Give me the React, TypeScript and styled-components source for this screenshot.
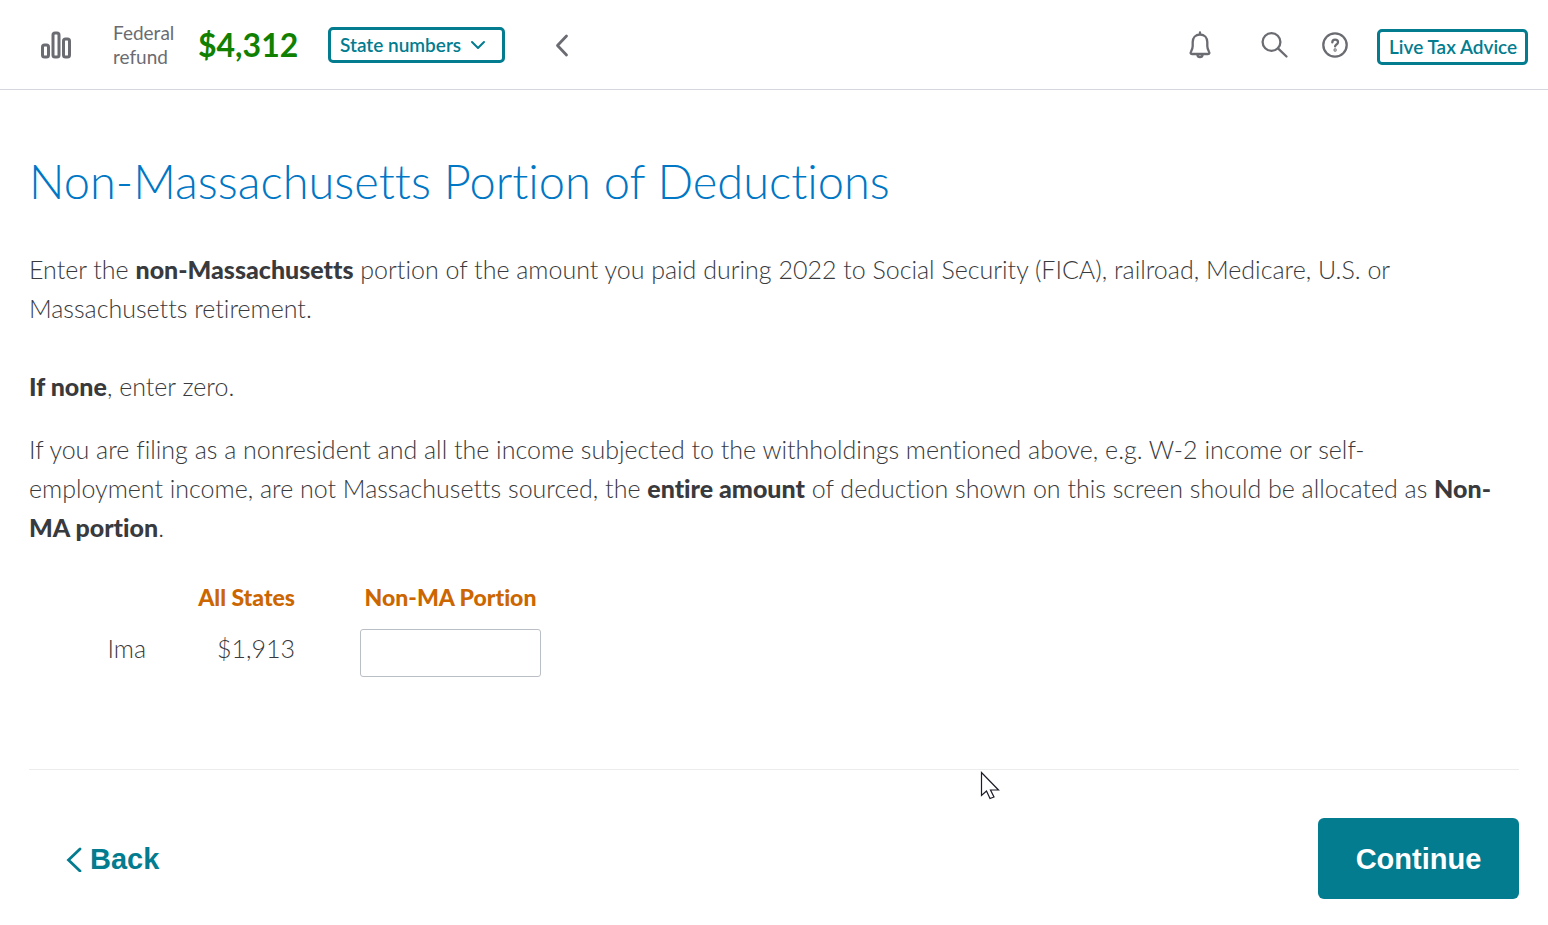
import React from "react";
import styled, { createGlobalStyle } from "styled-components";

const teal = "#037c8f";
const iconGrey = "#6b6c72";

const GlobalStyle = createGlobalStyle`
  *, *::before, *::after { box-sizing: border-box; }
  body {
    margin: 0;
    background: #fff;
    color: #393a3d;
    font-family: Lato, "Open Sans", sans-serif;
    font-weight: 300;
    font-variant-ligatures: none;
  }
`;

const Header = styled.header`
  display: flex;
  align-items: center;
  height: 90px;
  padding: 0 20px 0 40px;
  border-bottom: 1px solid #d4d7dc;
`;

const RefundLabel = styled.span`
  width: 62px;
  margin-left: 41px;
  color: ${iconGrey};
  font-size: 19px;
  font-weight: 400;
  line-height: 24px;
`;

const RefundAmount = styled.span`
  margin-left: 23px;
  width: 130px;
  color: #108000;
  font-size: 32px;
  font-weight: 700;
  line-height: 40px;
`;

const OutlineButton = styled.button<{ $wide?: boolean }>`
  display: flex;
  align-items: center;
  gap: 9px;
  flex: none;
  width: ${(p) => (p.$wide ? 177 : 151)}px;
  height: 36px;
  padding: 0 9px;
  border: 3px solid ${teal};
  border-radius: 5px;
  background: #fff;
  color: ${teal};
  font: 600 19px/24px Lato, "Open Sans", sans-serif;
  white-space: nowrap;
`;

const IconButton = styled.button`
  display: flex;
  flex: none;
  padding: 0;
  border: 0;
  background: none;
  color: ${iconGrey};
`;

const CollapseButton = styled(IconButton)`
  margin-left: 48px;
`;

const Tools = styled.div`
  display: flex;
  align-items: center;
  gap: 28px;
  margin-left: auto;
`;

const BellButton = styled(IconButton)`
  margin-right: 15px;
`;

const AdviceButton = styled(OutlineButton)`
  margin: 4px 0 0 -2px;
`;

const Main = styled.main`
  padding: 61px 29px 26px;
`;

const Title = styled.h1`
  margin: 0 0 39px;
  color: #0077c5;
  font-size: 47px;
  font-weight: 300;
  line-height: 60px;
`;

const Text = styled.p`
  margin: 0 0 24px;
  font-size: 25px;
  line-height: 39px;

  b { font-weight: 900; }
`;

const Amounts = styled.table`
  border-collapse: collapse;
  margin-top: 31px;
  font-size: 25px;
  line-height: 39px;
`;

const HeadCell = styled.th`
  padding: 0 0 12px;
  color: #cc6600;
  font-size: 23px;
  font-weight: 900;
  text-align: right;
`;

const NameCell = styled.th`
  width: 117px;
  padding: 0;
  font-weight: 300;
  text-align: right;
  vertical-align: top;
`;

const AmountCell = styled.td`
  width: 149px;
  padding: 0;
  text-align: right;
  vertical-align: top;
`;

const InputHead = styled(HeadCell)`
  padding: 0 0 12px 65px;
  text-align: center;
`;

const InputCell = styled.td`
  padding: 0 0 0 65px;
`;

const AmountInput = styled.input`
  display: block;
  width: 181px;
  height: 48px;
  padding: 0 12px;
  border: 1px solid #babec5;
  border-radius: 3px;
  background: #fff;
  color: inherit;
  font: inherit;
`;

const Footer = styled.footer`
  display: flex;
  align-items: center;
  justify-content: space-between;
  margin-top: 92px;
  padding-top: 48px;
  border-top: 1px solid #ebecee;
`;

const BackButton = styled.button`
  display: flex;
  align-items: center;
  gap: 8px;
  padding: 0 0 0 37px;
  border: 0;
  background: none;
  color: ${teal};
  font: 700 29px/40px "Liberation Sans", Arial, sans-serif;
`;

const ContinueButton = styled.button`
  width: 201px;
  height: 81px;
  padding: 0;
  border: 0;
  border-radius: 6px;
  background: ${teal};
  color: #fff;
  font: 700 29px/40px "Liberation Sans", Arial, sans-serif;
`;

const Pointer = styled.svg`
  position: absolute;
  top: 771px;
  left: 980px;
  pointer-events: none;
`;

export default function App() {
  return (
    <>
      <GlobalStyle />
      <Header>
        <IconButton aria-label="Tax summary">
          <svg width="32" height="32" viewBox="0 0 32 32" fill="none" stroke="currentColor" strokeWidth="3">
            <rect x="2.5" y="16" width="6" height="12" rx="2" />
            <rect x="13" y="4" width="6" height="24" rx="2" />
            <rect x="23.5" y="10" width="6" height="18" rx="2" />
          </svg>
        </IconButton>
        <RefundLabel>Federal refund</RefundLabel>
        <RefundAmount>$4,312</RefundAmount>
        <OutlineButton $wide>
          State numbers
          <svg width="16" height="10" viewBox="0 0 16 10" fill="none" stroke="currentColor" strokeWidth="2" strokeLinecap="round" strokeLinejoin="round">
            <path d="M2 2l6 6 6-6" />
          </svg>
        </OutlineButton>
        <CollapseButton aria-label="Collapse">
          <svg width="18" height="24" viewBox="0 0 18 24" fill="none" stroke="currentColor" strokeWidth="2.8" strokeLinecap="round" strokeLinejoin="round">
            <path d="M13.5 3L4.5 12.5l9 9.500" />
          </svg>
        </CollapseButton>
        <Tools>
          <BellButton aria-label="Notifications">
            <svg width="32" height="32" viewBox="0 0 32 32" fill="none" stroke="currentColor" strokeWidth="2.3" strokeLinecap="round" strokeLinejoin="round">
              <path d="M16 3.5v2M16 5.5c-4.600 0-7.300 3.400-7.300 7.600v4c0 2.500-.6 3.600-1.600 5.400-.8 1.300-.8 2.500 1 2.500h15.800c1.800 0 1.800-1.200 1-2.500-1-1.800-1.600-2.900-1.600-5.400v-4C23.300 8.900 20.600 5.500 16 5.500zM13.300 25.500c.2 1.500 1.200 2.500 2.700 2.500s2.500-1 2.700-2.500" />
            </svg>
          </BellButton>
          <IconButton aria-label="Search">
            <svg width="32" height="32" viewBox="0 0 32 32" fill="none" stroke="currentColor" strokeWidth="2.3" strokeLinecap="round">
              <circle cx="12.5" cy="13" r="8.9" />
              <path d="M19 19.400L27.500 27.500" />
            </svg>
          </IconButton>
          <IconButton aria-label="Help">
            <svg width="32" height="32" viewBox="0 0 32 32" fill="none" stroke="currentColor" strokeWidth="2.3" strokeLinecap="round" strokeLinejoin="round">
              <circle cx="16" cy="16" r="11.7" />
              <path d="M13.3 13.4c0-1.700 1.100-2.700 2.800-2.700s2.900 1 2.900 2.500c0 2.300-2.900 2.200-2.900 4.200" />
              <circle cx="16.1" cy="21" r=".5" />
            </svg>
          </IconButton>
          <AdviceButton>Live Tax Advice</AdviceButton>
        </Tools>
      </Header>
      <Main>
        <Title>Non-Massachusetts Portion of Deductions</Title>
        <Text>
          Enter the <b>non-Massachusetts</b> portion of the amount you paid during 2022 to Social
          Security (FICA), railroad, Medicare, U.S. or Massachusetts retirement.
          <br />
          <br />
          <b>If none</b>, enter zero.
        </Text>
        <Text>
          If you are filing as a nonresident and all the income subjected to the withholdings
          mentioned above, e.g. W-2 income or self-<br />employment income, are not Massachusetts
          sourced, the <b>entire amount</b> of deduction shown on this screen should be allocated
          as <b>Non-<br />MA portion</b>.
        </Text>
        <Amounts>
          <thead>
            <tr>
              <td />
              <HeadCell scope="col">All States</HeadCell>
              <InputHead scope="col" id="portion">Non-MA Portion</InputHead>
            </tr>
          </thead>
          <tbody>
            <tr>
              <NameCell scope="row" id="person">Ima</NameCell>
              <AmountCell>$1,913</AmountCell>
              <InputCell>
                <AmountInput type="text" aria-labelledby="person portion" />
              </InputCell>
            </tr>
          </tbody>
        </Amounts>
        <Footer>
          <BackButton>
            <svg width="16" height="26" viewBox="0 0 16 26" fill="none" stroke="currentColor" strokeWidth="2.8" strokeLinecap="round">
              <path d="M14 3L2.5 14 14 25" />
            </svg>
            Back
          </BackButton>
          <ContinueButton>Continue</ContinueButton>
        </Footer>
      </Main>
      <Pointer width="20" height="30" viewBox="0 0 20 30" fill="#fff" stroke="#1c1c28" strokeWidth="1.2">
        <path d="M1.5 1.5v23l5-4.500 3.500 7.500 4-1.500-3.500-7h8z" />
      </Pointer>
    </>
  );
}
